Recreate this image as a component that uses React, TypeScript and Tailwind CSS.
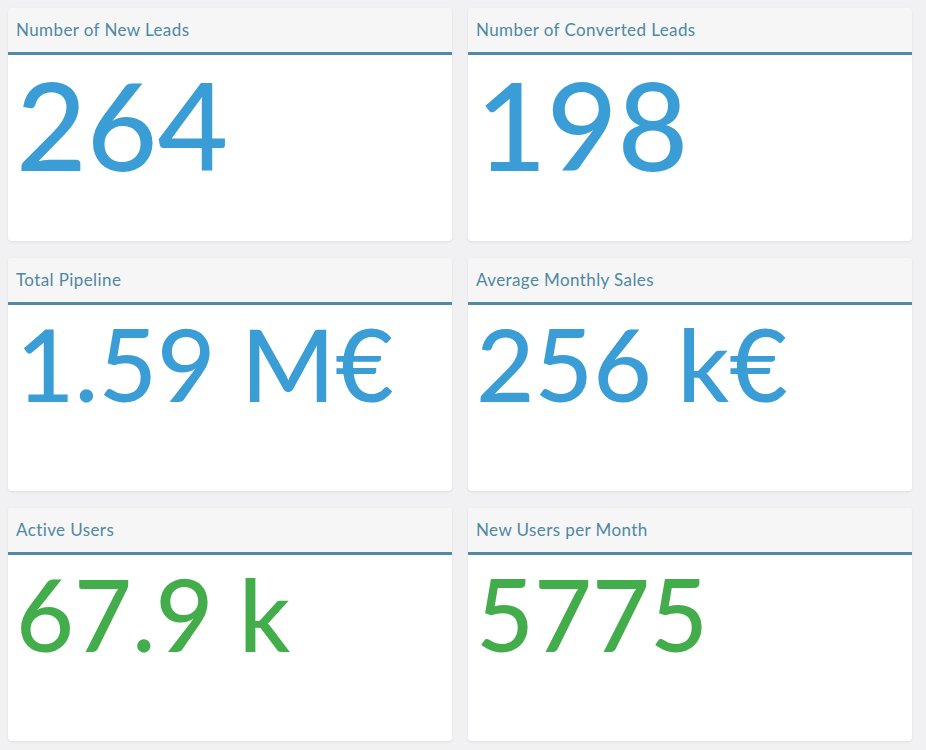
import React from "react";

type Card = { title: string; value: string; color: string; size: string };

const cards: Card[] = [
  { title: "Number of New Leads", value: "264", color: "text-[#3a9dd6]", size: "text-[122px]" },
  { title: "Number of Converted Leads", value: "198", color: "text-[#3a9dd6]", size: "text-[122px]" },
  { title: "Total Pipeline", value: "1.59 M€", color: "text-[#3a9dd6]", size: "text-[101px]" },
  { title: "Average Monthly Sales", value: "256 k€", color: "text-[#3a9dd6]", size: "text-[101px]" },
  { title: "Active Users", value: "67.9 k", color: "text-[#44ad4b]", size: "text-[100px]" },
  { title: "New Users per Month", value: "5775", color: "text-[#44ad4b]", size: "text-[100px]" },
];

export default function App() {
  return (
    <div
      className="w-[926px] h-[750px] bg-[#f1f1f3] pl-2 pt-2 pr-[14px] overflow-hidden"
      style={{ fontFamily: "Lato, 'Noto Sans', sans-serif" }}
    >
      <div className="grid grid-cols-2 gap-x-4 gap-y-[17px]">
        {cards.map((c) => (
          <div
            key={c.title}
            className="h-[233px] bg-white rounded-[4px] shadow-[0_1px_3px_rgba(0,0,0,0.08)] overflow-hidden flex flex-col"
          >
            <div className="h-[47px] shrink-0 bg-[#f6f6f7] border-b-[3px] border-[#4f8ba4] px-2 flex items-center">
              <span className="text-[17px] tracking-[0.4px] text-[#4e88a2] leading-none -mt-[1px]">{c.title}</span>
            </div>
            <div className="px-2 pt-[8px]">
              <div className={`${c.size} ${c.color} font-medium leading-none whitespace-nowrap`}>{c.value}</div>
            </div>
          </div>
        ))}
      </div>
    </div>
  );
}
